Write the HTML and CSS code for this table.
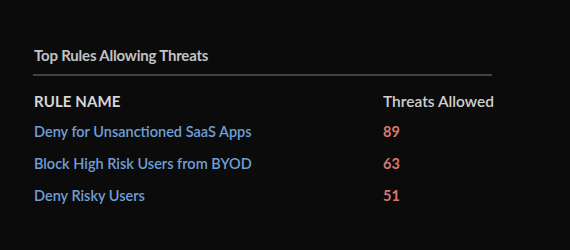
FILE: index.html
```html
<!DOCTYPE html>
<html>
<head>
<meta charset="utf-8">
<link rel="stylesheet" href="styles.css">
</head>
<body>
<div class="card">
  <h2 class="title">Top Rules Allowing Threats</h2>
  <div class="table">
    <div class="row head">
      <span class="name">RULE NAME</span>
      <span class="count">Threats Allowed</span>
    </div>
    <div class="row">
      <span class="name link">Deny for Unsanctioned SaaS Apps</span>
      <span class="count num">89</span>
    </div>
    <div class="row">
      <span class="name link">Block High Risk Users from BYOD</span>
      <span class="count num">63</span>
    </div>
    <div class="row">
      <span class="name link">Deny Risky Users</span>
      <span class="count num">51</span>
    </div>
  </div>
</div>
</body>
</html>
```
FILE: styles.css
```css
html, body {
  margin: 0;
  padding: 0;
  background: #0b0b0c;
  width: 570px;
  height: 250px;
  overflow: hidden;
}
.card {
  font-family: Lato, "Open Sans", sans-serif;
  padding: 45px 36px 0 33px;
  width: 459px;
}
.title {
  margin: 0;
  font-size: 15px;
  font-weight: 700;
  color: #c2c2c2;
  line-height: 20px;
  padding: 0 0 9px 1px;
  border-bottom: 2px solid #424244;
  letter-spacing: -0.2px;
}
.table {
  padding-top: 10px;
}
.row {
  display: grid;
  grid-template-columns: 349px 1fr;
  height: 32px;
  align-items: center;
  padding-left: 1px;
  white-space: nowrap;
}
.head {
  height: 29px;
}
.head .name {
  font-size: 15px;
  font-weight: 700;
  color: #d6d6d6;
  letter-spacing: 0.1px;
}
.head .count {
  font-size: 15.5px;
  font-weight: 600;
  color: #d0d0d0;
  letter-spacing: 0;
}
.link {
  font-size: 14.5px;
  font-weight: 600;
  color: #6f9fd6;
}
.num {
  font-size: 14.5px;
  font-weight: 700;
  color: #d9786e;
}
```
